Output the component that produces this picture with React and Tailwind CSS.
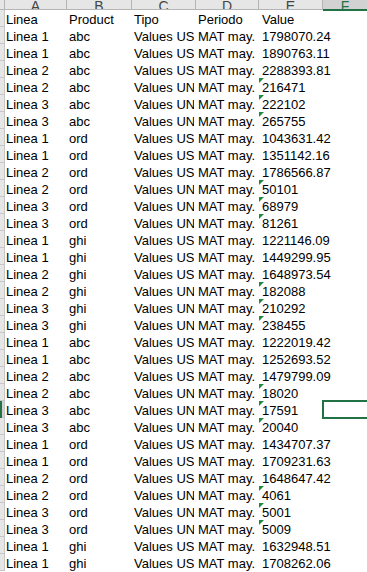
import React from "react";

const data = [
  ["Linea 1", "abc", "USD", "1798070.24"],
  ["Linea 1", "abc", "USD", "1890763.11"],
  ["Linea 2", "abc", "USD", "2288393.81"],
  ["Linea 2", "abc", "UNITS", "216471"],
  ["Linea 3", "abc", "UNITS", "222102"],
  ["Linea 3", "abc", "UNITS", "265755"],
  ["Linea 1", "ord", "USD", "1043631.42"],
  ["Linea 1", "ord", "USD", "1351142.16"],
  ["Linea 2", "ord", "USD", "1786566.87"],
  ["Linea 2", "ord", "UNITS", "50101"],
  ["Linea 3", "ord", "UNITS", "68979"],
  ["Linea 3", "ord", "UNITS", "81261"],
  ["Linea 1", "ghi", "USD", "1221146.09"],
  ["Linea 1", "ghi", "USD", "1449299.95"],
  ["Linea 2", "ghi", "USD", "1648973.54"],
  ["Linea 2", "ghi", "UNITS", "182088"],
  ["Linea 3", "ghi", "UNITS", "210292"],
  ["Linea 3", "ghi", "UNITS", "238455"],
  ["Linea 1", "abc", "USD", "1222019.42"],
  ["Linea 1", "abc", "USD", "1252693.52"],
  ["Linea 2", "abc", "USD", "1479799.09"],
  ["Linea 2", "abc", "UNITS", "18020"],
  ["Linea 3", "abc", "UNITS", "17591"],
  ["Linea 3", "abc", "UNITS", "20040"],
  ["Linea 1", "ord", "USD", "1434707.37"],
  ["Linea 1", "ord", "USD", "1709231.63"],
  ["Linea 2", "ord", "USD", "1648647.42"],
  ["Linea 2", "ord", "UNITS", "4061"],
  ["Linea 3", "ord", "UNITS", "5001"],
  ["Linea 3", "ord", "UNITS", "5009"],
  ["Linea 1", "ghi", "USD", "1632948.51"],
  ["Linea 1", "ghi", "USD", "1708262.06"],
];

const SELECTED = 23;

function Cell({ w, inner, children, pad = "pl-[1px]" }) {
  return (
    <div className={`relative h-[17px] shrink-0 ${w}`}>
      <div className={`h-[17px] overflow-hidden whitespace-nowrap pt-[2px] leading-[15px] ${inner} ${pad}`}>
        {children}
      </div>
    </div>
  );
}

function Row({ idx, cells, tri }) {
  const sel = idx === SELECTED;
  return (
    <div className="flex h-[17px]">
      <div className={`relative h-[17px] w-[5px] shrink-0 border-b border-r border-[#c6c6c6] ${sel ? "bg-[#d2d2d2]" : "bg-[#e6e6e6]"}`}>
        {sel && <div className="absolute left-0 top-0 h-[17px] w-[2px] bg-[#217346]" />}
      </div>
      <Cell w="w-[62px]" inner="w-[61px]">{cells[0]}</Cell>
      <Cell w="w-[65px]" inner="w-[64px]" pad="pl-[2px]">{cells[1]}</Cell>
      <Cell w="w-[64px]" inner="w-[62px]" pad="pl-[2px]">{cells[2]}</Cell>
      <Cell w="w-[63px]" inner="w-[59px]" pad="pl-[2px]">{cells[3]}</Cell>
      <div className="relative h-[17px] w-[64px] shrink-0">
        {tri && (
          <div className="absolute left-0 top-0 h-0 w-0 border-r-[5px] border-t-[5px] border-r-transparent border-t-[#1e8a3e]" />
        )}
        <div className="h-[17px] whitespace-nowrap pl-[3px] pt-[2px] leading-[15px]">{cells[4]}</div>
      </div>
      <div className="relative h-[17px] flex-1">
        {sel && (
          <div className="absolute -left-[1px] -top-[1px] h-[19px] w-[60px] border-2 border-[#217346]" />
        )}
      </div>
    </div>
  );
}

function Head({ w, label, sel }) {
  return (
    <div
      className={`relative flex h-[10px] shrink-0 items-end justify-center overflow-hidden border-b border-r border-[#b4b4b4] ${w} ${
        sel ? "bg-[#d2d2d2] text-[#217346]" : "bg-[#e6e6e6] text-[#444444]"
      }`}
    >
      <span className="block translate-y-[4px] text-[14px] leading-[14px]">{label}</span>
    </div>
  );
}

export default function App() {
  return (
    <div className="relative h-[572px] w-[367px] overflow-hidden bg-white font-['Liberation_Sans',Arial,sans-serif] text-[13px] text-black">
      <div className="flex h-[10px]">
        <div className="h-[10px] w-[5px] shrink-0 border-b border-r border-[#b4b4b4] bg-[#e6e6e6]" />
        <Head w="w-[62px]" label="A" />
        <Head w="w-[65px]" label="B" />
        <Head w="w-[64px]" label="C" />
        <Head w="w-[63px]" label="D" />
        <Head w="w-[64px]" label="E" />
        <div className="relative h-[10px] flex-1 bg-[#d2d2d2] text-[#217346]">
          <div className="flex h-[9px] w-full items-end justify-center overflow-hidden">
            <span className="block translate-y-[4px] text-[14px] leading-[14px]">F</span>
          </div>
          <div className="absolute bottom-[-1px] left-0 h-[2px] w-full bg-[#217346]" />
        </div>
      </div>
      <Row idx={0} cells={["Linea", "Product", "Tipo", "Periodo", "Value"]} />
      {data.map((d, i) => (
        <Row
          key={i}
          idx={i + 1}
          tri={d[2] === "UNITS"}
          cells={[d[0], d[1], `Values ${d[2]}`, "MAT may.-19", d[3]]}
        />
      ))}
    </div>
  );
}
